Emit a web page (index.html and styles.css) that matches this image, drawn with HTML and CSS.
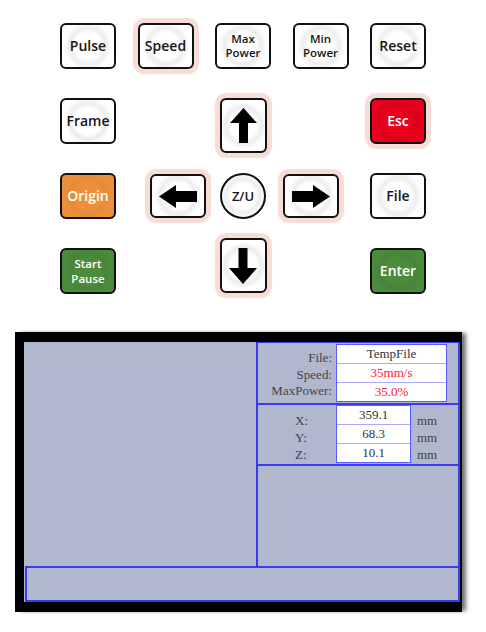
FILE: index.html
```html
<!DOCTYPE html>
<html>
<head>
<meta charset="utf-8">
<link rel="stylesheet" href="styles.css">
</head>
<body>
<div class="keypad">
  <div class="key c1 r1"><span>Pulse</span></div>
  <div class="key c2 r1 halo"><span>Speed</span></div>
  <div class="key c3 r1 small"><span>Max<br>Power</span></div>
  <div class="key c4 r1 small"><span>Min<br>Power</span></div>
  <div class="key c5 r1"><span>Reset</span></div>

  <div class="key c1 r2"><span>Frame</span></div>
  <div class="key arrow-v up c3 r2 halo">
    <svg width="27" height="35" viewBox="0 0 27 35"><polygon points="13.5,0 27,15 18,15 18,35 9,35 9,15 0,15" fill="#000"/></svg>
  </div>
  <div class="key c5 r2 halo esc"><span>Esc</span></div>

  <div class="key c1 r3 origin"><span>Origin</span></div>
  <div class="key c2 r3 halo arrow-h left">
    <svg width="38" height="23" viewBox="0 0 38 23"><polygon points="0,11.5 17,0 17,6 38,6 38,17 17,17 17,23" fill="#000"/></svg>
  </div>
  <div class="zu c3 r3"><span>Z/U</span></div>
  <div class="key c4 r3 halo arrow-h right">
    <svg width="38" height="23" viewBox="0 0 38 23"><polygon points="38,11.5 21,0 21,6 0,6 0,17 21,17 21,23" fill="#000"/></svg>
  </div>
  <div class="key c5 r3"><span>File</span></div>

  <div class="key c1 r4 green small2"><span class="stack"><span>Start</span><span>Pause</span></span></div>
  <div class="key arrow-v down c3 r4 halo">
    <svg width="28" height="36" viewBox="0 0 28 36"><polygon points="14,36 28,20 18.5,20 18.5,0 9.5,0 9.5,20 0,20" fill="#000"/></svg>
  </div>
  <div class="key c5 r4 green"><span>Enter</span></div>
</div>

<div class="screen">
  <div class="panel">
    <div class="left-area"></div>
    <div class="right-col">
      <div class="box info">
        <div class="labels">
          <div>File:</div>
          <div>Speed:</div>
          <div>MaxPower:</div>
        </div>
        <div class="values wide">
          <div>TempFile</div>
          <div class="red">35mm/s</div>
          <div class="red">35.0%</div>
        </div>
      </div>
      <div class="box coords">
        <div class="labels axes">
          <div>X:</div>
          <div>Y:</div>
          <div>Z:</div>
        </div>
        <div class="values narrow">
          <div>359.1</div>
          <div>68.3</div>
          <div>10.1</div>
        </div>
        <div class="units">
          <div>mm</div>
          <div>mm</div>
          <div>mm</div>
        </div>
      </div>
      <div class="box empty"></div>
    </div>
    <div class="bottom-bar"></div>
  </div>
</div>
</body>
</html>
```

FILE: styles.css
```css
html, body {
  margin: 0;
  padding: 0;
  background: #fff;
}

body {
  width: 486px;
  height: 632px;
  overflow: hidden;
  font-family: "Open Sans", "Noto Sans", sans-serif;
}

.keypad {
  display: grid;
  grid-template-columns: repeat(5, 56px);
  grid-template-rows: repeat(4, 46px);
  column-gap: 21.5px;
  row-gap: 29px;
  padding: 23px 0 0 60px;
}

.c1 { grid-column: 1; }
.c2 { grid-column: 2; }
.c3 { grid-column: 3; }
.c4 { grid-column: 4; }
.c5 { grid-column: 5; }
.r1 { grid-row: 1; }
.r2 { grid-row: 2; }
.r3 { grid-row: 3; }
.r4 { grid-row: 4; }

.key {
  box-sizing: border-box;
  width: 56px;
  height: 46px;
  border: 2px solid #111;
  border-radius: 6px;
  background:
    radial-gradient(circle at 50% 50%, rgba(255,255,255,0) 13px, rgba(0,0,0,0.07) 18px, rgba(255,255,255,0) 24px),
    #fff;
  display: flex;
  align-items: center;
  justify-content: center;
  text-align: center;
  font-size: 14px;
  font-weight: 600;
  color: #151515;
  line-height: 1.1;
}

.key.small {
  font-size: 11.5px;
  line-height: 1.2;
}

.key.small2 {
  font-size: 11.5px;
  line-height: 15.5px;
}

.stack {
  display: flex;
  flex-direction: column;
  align-items: center;
}

.halo {
  box-shadow: 0 0 1px 5px #f7ddd5;
}

.esc {
  background:
    radial-gradient(circle at 50% 50%, rgba(0,0,0,0) 13px, rgba(0,0,0,0.06) 18px, rgba(0,0,0,0) 24px),
    #ea001c;
  color: #fff;
}

.origin {
  background:
    radial-gradient(circle at 50% 50%, rgba(0,0,0,0) 13px, rgba(0,0,0,0.04) 18px, rgba(0,0,0,0) 24px),
    #ee903b;
  color: #fff;
}

.green {
  background:
    radial-gradient(circle at 50% 50%, rgba(0,0,0,0) 13px, rgba(0,0,0,0.05) 18px, rgba(0,0,0,0) 24px),
    #4b8b3b;
  color: #fff;
}

.arrow-v {
  width: 47px;
  height: 55px;
  justify-self: center;
}

.arrow-v.up {
  align-self: start;
}

.arrow-v.down {
  align-self: end;
  margin-bottom: 1px;
}

.arrow-v svg,
.arrow-h svg {
  display: block;
}

.arrow-h {
  height: 44px;
  align-self: center;
}

.arrow-h.left {
  margin-left: 12px;
}

.arrow-h.right {
  margin-left: -10px;
}

.zu {
  box-sizing: border-box;
  width: 46px;
  height: 46px;
  border: 2px solid #111;
  border-radius: 50%;
  justify-self: center;
  align-self: center;
  display: flex;
  align-items: center;
  justify-content: center;
  background:
    radial-gradient(circle at 50% 50%, rgba(255,255,255,0) 12px, rgba(0,0,0,0.07) 17px, rgba(255,255,255,0) 22px),
    #fff;
  font-size: 13px;
  font-weight: 600;
  color: #151515;
}

/* ---------- screen ---------- */

.screen {
  margin: 38px 0 0 15px;
  width: 447px;
  box-sizing: border-box;
  background: #000;
  padding: 10px 2px 10px 9px;
  box-shadow: 5px 0 4px -1px rgba(0,0,0,0.55);
}

.panel {
  display: grid;
  grid-template-columns: 232px 204px;
  grid-template-rows: 224px 36px;
  background: #b1b7cd;
  font-family: "Liberation Serif", "Times New Roman", serif;
  font-size: 13px;
  color: #444;
}

.left-area {
  grid-column: 1;
  grid-row: 1;
}

.right-col {
  grid-column: 2;
  grid-row: 1;
  box-sizing: border-box;
  border-left: 2px solid #3a3af2;
  border-right: 2px solid #3a3af2;
  border-top: 1px solid #3a3af2;
  display: flex;
  flex-direction: column;
}

.box {
  box-sizing: border-box;
  display: flex;
  border-bottom: 2px solid #3a3af2;
}

.box.info {
  height: 62px;
  padding-top: 1px;
}

.box.coords {
  height: 61px;
  padding-top: 0;
}

.box.empty {
  flex: 1;
  border-bottom: none;
}

.labels {
  width: 78px;
  box-sizing: border-box;
  padding-right: 4px;
  text-align: right;
  display: flex;
  flex-direction: column;
  padding-top: 6px;
}

.labels div {
  height: 16.5px;
  line-height: 16.5px;
}

.labels.axes {
  text-align: left;
  padding-left: 37px;
  padding-top: 7px;
}

.labels.axes div {
  height: 17px;
  line-height: 17px;
}

.values {
  box-sizing: border-box;
  background: #fff;
  border: 1px solid #5a5aff;
  display: flex;
  flex-direction: column;
  color: #333;
  text-align: center;
}

.values div {
  flex: 1;
  line-height: 17px;
  border-bottom: 1px solid #a9a9ff;
}

.values div:last-child {
  border-bottom: none;
}

.values.wide {
  width: 111px;
  height: 58px;
}

.values.narrow {
  width: 75px;
  height: 58px;
  margin-top: 0;
}

.red {
  color: #ff1a2e;
}

.units {
  padding-left: 6px;
  padding-top: 7px;
  display: flex;
  flex-direction: column;
}

.units div {
  height: 17px;
  line-height: 17px;
}

.bottom-bar {
  grid-column: 1 / span 2;
  grid-row: 2;
  box-sizing: border-box;
  border: 2px solid #3a3af2;
  margin-left: 1px;
}
```
